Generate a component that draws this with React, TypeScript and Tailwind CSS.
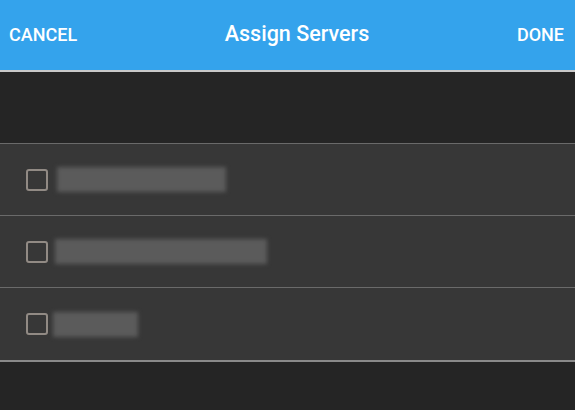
import { useState } from 'react'

type Server = { id: string; width: number; shift: number }

const servers: Server[] = [
  { id: 'srv-1', width: 169, shift: 0 },
  { id: 'srv-2', width: 212, shift: -2 },
  { id: 'srv-3', width: 85, shift: -4 },
]

function App() {
  const [picked, setPicked] = useState<Record<string, boolean>>({})

  return (
    <main className="w-[575px] h-[410px] bg-[#252525] font-['Roboto',sans-serif] overflow-hidden">
      <header className="h-[72px] bg-[#34a3ec] border-b-2 border-[#c9c9c9] flex items-center justify-between pl-[9px] pr-[10px] relative">
        <button className="text-white text-[18px] font-medium pb-[2px]">CANCEL</button>
        <h1 className="absolute left-0 right-0 text-center text-white text-[21.5px] font-medium pl-[19px] pb-[2px] pointer-events-none">
          Assign Servers
        </h1>
        <button className="text-white text-[18px] font-medium pr-[1px] pb-[2px]">DONE</button>
      </header>

      <div className="h-[71px]" />

      <ul className="border-t border-[#6a6a6a] border-b-2 border-b-[#8a8a8a]">
        {servers.map((s, i) => (
          <li
            key={s.id}
            className={`h-[72px] bg-[#373737] flex items-center pl-[26px] ${i < servers.length - 1 ? 'border-b border-[#6a6a6a]' : ''}`}
          >
            <button
              onClick={() => setPicked({ ...picked, [s.id]: !picked[s.id] })}
              className="w-[22px] h-[22px] rounded-[3px] border-2 border-[#918a84] shrink-0"
            />
            <div
              className="h-[25px] bg-[#5b5b5b] blur-[2px]"
              style={{ width: s.width, marginLeft: 9 + s.shift }}
            />
          </li>
        ))}
      </ul>
    </main>
  )
}

export default App
